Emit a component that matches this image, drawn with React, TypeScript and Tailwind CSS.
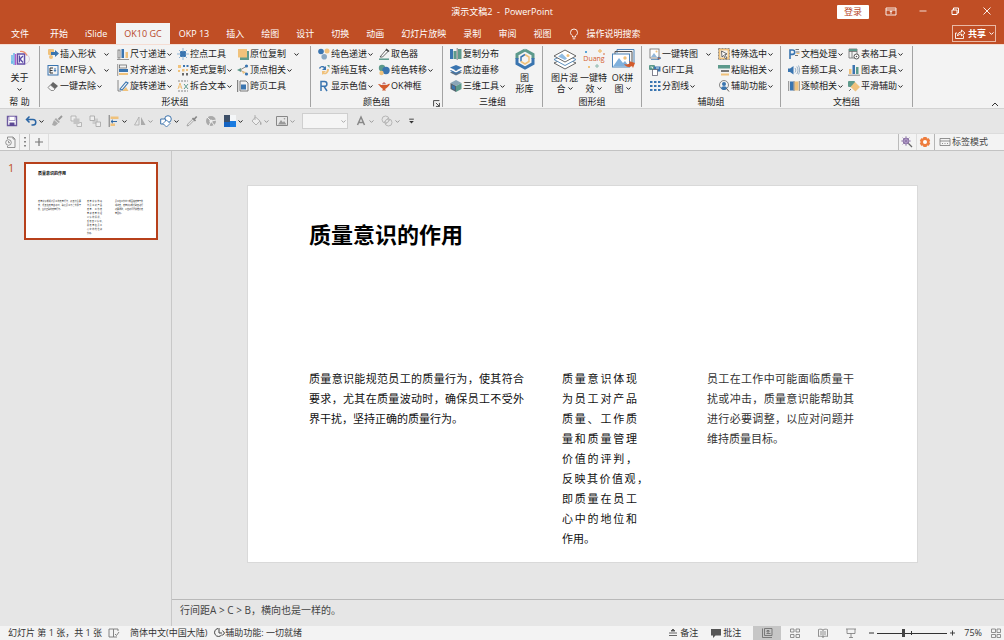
import { useState } from "react";
import type { ReactNode } from "react";

const BLUE = "#3a75b0";
const TEAL = "#5d9a8c";
const SAND = "#f0c27c";
const GREY = "#6b6b6b";
const RUST = "#d35b2c";

function Icon({ children, size = "size-3" }: { children: ReactNode; size?: string }) {
  return (
    <svg viewBox="0 0 12 12" className={`${size} shrink-0`} fill="none" aria-hidden="true">
      {children}
    </svg>
  );
}

function Chevron({ className = "" }: { className?: string }) {
  return (
    <svg viewBox="0 0 5 3" className={`w-[5px] h-[3px] shrink-0 ${className}`} fill="none" aria-hidden="true">
      <path d="M.5 .4 2.5 2.4 4.5 .4" stroke="currentColor" strokeWidth="1" />
    </svg>
  );
}

const icons: Record<string, ReactNode> = {
  insertShape: (
    <>
      <rect x="1" y="1" width="6" height="6" rx="1" fill={SAND} />
      <path d="M4 4h4V2l4 3.500-4 3.500V7H4z" fill={BLUE} />
      <circle cx="4" cy="9" r="2" fill={SAND} />
    </>
  ),
  emf: (
    <>
      <rect x="1" y="1.500" width="10" height="9.500" stroke={BLUE} />
      <path d="M6 4H3v5h3M3 6.500h2.500" stroke="#333" />
      <path d="M8 4v3M7 6l1 1.500L9 6" stroke={BLUE} />
    </>
  ),
  eraser: (
    <>
      <path d="M1 7.500 6 2l5 4-4.500 4.500H4z" fill="#666" />
      <path d="M1 7.500 3.500 5 8 9l-1.500 1.500H4z" fill="#f5f5f5" stroke="#777" strokeWidth=".7" />
    </>
  ),
  size: (
    <>
      <rect x="1" y="2" width="2" height="8" stroke={GREY} strokeWidth=".8" />
      <rect x="4.500" y="1" width="2.500" height="9" fill={BLUE} />
      <rect x="8.500" y="4" width="2.500" height="6" fill={SAND} />
      <path d="M0 11.500h12" stroke={GREY} strokeWidth=".7" />
    </>
  ),
  align: (
    <>
      <rect x="2.500" y="1" width="7" height="3" stroke={GREY} strokeWidth=".8" />
      <rect x="2" y="5" width="9" height="3" fill={BLUE} />
      <rect x="2" y="9" width="9" height="2" fill={SAND} />
      <path d="M.7 0v12" stroke={GREY} strokeWidth=".7" />
    </>
  ),
  rotate: (
    <>
      <path d="M1 0v11h3" stroke={GREY} strokeWidth=".8" />
      <path d="M5 11l4-4 2.500 4z" fill={SAND} />
      <path d="M3 9 9 2l2 1-6 7z" fill="#f5f5f5" stroke={BLUE} strokeWidth="1.100" />
    </>
  ),
  control: (
    <>
      <rect x="3" y="3" width="6" height="6" fill={BLUE} />
      <path d="M6 0v12M0 6h12M2 2l8 8M10 2 2 10" stroke="#77a4cd" strokeWidth=".8" />
      <rect x="4" y="4" width="4" height="4" fill={BLUE} />
    </>
  ),
  matrix: (
    <>
      <path d="M1 1h3v3H1zM1 6h2v2H1z" fill={SAND} />
      <path d="M6 1h2v2H6zM9.500 1h2v2h-2z" fill={BLUE} />
      <path d="M5 5h2.500v2.500H5zM9 5h2v2H9z" fill={SAND} />
      <path d="M5 9h2v2.500H5zM9 9h2v2.500H9z" fill={GREY} />
    </>
  ),
  splitText: (
    <>
      <path d="M1 1h10M1 11h10" stroke={GREY} strokeWidth=".8" strokeDasharray="2 1" />
      <path d="M1 9 3 3l2 6M1.600 7h2.800" stroke={SAND} />
      <path d="M7 4l4 5M11 4 7 9" stroke={TEAL} />
    </>
  ),
  copyInPlace: (
    <>
      <path d="M3 3h9v9H3z" fill={TEAL} />
      <path d="M1 1h9v8.500H1z" fill={SAND} />
    </>
  ),
  vertex: (
    <>
      <path d="M10 2 3 6l7 4" stroke={GREY} strokeWidth=".8" />
      <path d="M0 6l4-2v4z" fill={TEAL} />
      <circle cx="9.500" cy="2" r="1.600" fill={BLUE} />
      <circle cx="9.500" cy="10" r="1.600" fill={BLUE} />
      <path d="M5 7l4 1-3 2z" fill={SAND} />
    </>
  ),
  crossPage: (
    <>
      <path d="M3 1h6l2 2v8H3z" stroke={GREY} strokeWidth=".9" />
      <path d="M.7 0v12" stroke={GREY} />
      <rect x="4" y="4.500" width="5" height="5" fill={BLUE} />
    </>
  ),
  solid: (
    <>
      <circle cx="3" cy="3.500" r="2.800" fill={BLUE} />
      <circle cx="9" cy="3" r="2.500" fill={SAND} />
      <circle cx="6.200" cy="8.800" r="2.800" fill="#8aa8c2" />
    </>
  ),
  gradient: (
    <>
      <path d="M1 4c2-3 5-2 6-1l1-1v4H4l2-2C4 3 3 3 2 5z" fill={BLUE} />
      <path d="M11 5c0 4-3 6-6 5l-1 1V7h4L6 9c2 0 3-2 3-4z" fill={SAND} />
      <path d="M9 1h2.500v3z" fill={TEAL} />
    </>
  ),
  colorValue: (
    <path d="M3 11V1.500h3.500a2.300 2.300 0 0 1 0 4.800H3M6 6.300 9 11" stroke={BLUE} strokeWidth="1.500" />
  ),
  picker: (
    <>
      <path d="M2 9 8 2l2 1.500L4.500 9z" stroke="#555" fill="#fff" strokeWidth=".9" />
      <path d="M8 1l3 2.500" stroke="#444" strokeWidth="1.600" />
      <path d="M1 11.200h10" stroke={TEAL} strokeWidth="1.500" />
    </>
  ),
  solidShift: (
    <>
      <circle cx="4" cy="4" r="3.200" fill={TEAL} />
      <circle cx="8" cy="6.500" r="3.700" fill={BLUE} />
      <circle cx="3.500" cy="9" r="2.200" fill={SAND} />
    </>
  ),
  lamp: (
    <>
      <path d="M0 4c2-.5 2.500 1 4 1h4c2 0 2-2 4-1-1 2-3 4-4 4.500L7 9l1 1.500H4L5 9C3 8 2 6 0 4z" fill={RUST} />
      <path d="M5 4.500V3h2v1.500" stroke="#a33" strokeWidth=".8" />
    </>
  ),
  distribute: (
    <>
      <rect x="0" y="1" width="3" height="10" fill={BLUE} />
      <rect x="3.500" y="3" width="3" height="8" fill={TEAL} />
      <path d="M8 1h3.500v10H8z" fill={TEAL} />
      <path d="M7.200 0v12" stroke="#555" strokeWidth=".7" />
    </>
  ),
  bottomShift: (
    <>
      <path d="M0 8.500 6 6l6 2.500L6 11.500z" fill="#60758a" />
      <path d="M0 4.500 6 7l6-2.500V6L6 9 0 6z" fill="#fff" />
      <path d="M0 3.500 6 1l6 2.500-6 3z" fill={BLUE} />
      <path d="M1 6l5 2.500L11 6l1 .8-6 3-6-3z" fill={BLUE} />
    </>
  ),
  cube: (
    <>
      <path d="M6 0l5.500 3L6 6 .5 3z" fill="#8aa6b8" />
      <path d="M.5 3 6 6v6L.5 9z" fill="#55636e" />
      <path d="M11.500 3 6 6v6l5.500-3z" fill={TEAL} />
      <path d="M2 5l3 1.600v3.500L2 8.500z" fill={BLUE} />
    </>
  ),
  toImage: (
    <>
      <rect x="1" y="1" width="9" height="9" stroke={GREY} strokeWidth=".8" fill="#fff" />
      <path d="M2 9l3-4 3 4z" fill="#92b8da" />
      <path d="M2 11.500h7M9 9l3 1-3 2z" stroke={BLUE} fill={RUST} strokeWidth=".7" />
      <circle cx="7.500" cy="3.500" r="1" fill={SAND} />
    </>
  ),
  gif: (
    <>
      <rect x="0" y="1" width="6" height="5" rx="1" fill={TEAL} />
      <rect x="5" y="2.500" width="6.500" height="5" fill={BLUE} />
      <rect x="3.500" y="5.500" width="5" height="6" fill="#fff" stroke="#667" strokeWidth=".8" />
      <path d="M1.500 3h2v1.500M7 4h3" stroke="#fff" strokeWidth=".8" />
    </>
  ),
  divider: (
    <path
      d="M1 1h2.500v2H1zM5 1h2.500v2H5zM9 1h2.500v2H9zM1 5h2.500v2H1zM5 5h2.500v2H5zM9 5h2.500v2H9zM1 9h2.500v2H1zM5 9h2.500v2H5zM9 9h2.500v2H9z"
      fill={BLUE}
    />
  ),
  select: (
    <>
      <rect x="1.500" y="1.500" width="9" height="9" stroke={SAND} strokeWidth="1.800" />
      <path d="M.5 .5h11v11H.5z" stroke={GREY} strokeWidth=".7" strokeDasharray="2 1" />
      <path d="M3.500 3l5.500 3-2.300.7L9 10l-1.500.8L5.700 7.500 4 9z" fill="#fff" stroke="#444" strokeWidth=".8" />
    </>
  ),
  paste: (
    <>
      <rect x="0" y="1" width="12" height="3.500" fill={TEAL} />
      <rect x="3" y="6" width="8" height="2" fill="#777" />
      <rect x="3" y="9.500" width="8" height="2" fill={SAND} />
    </>
  ),
  assist: (
    <>
      <circle cx="6" cy="5" r="4.500" stroke={GREY} strokeWidth=".8" />
      <circle cx="6" cy="4" r="2" fill={BLUE} />
      <path d="M3 8.500c0-3 6-3 6 0L7 10H5z" fill={BLUE} />
      <path d="M8.500 8.500 11 11.500" stroke="#555" />
    </>
  ),
  doc: (
    <>
      <path d="M2 11V2h2.500a2.200 2.200 0 0 1 0 4.400H2" stroke={BLUE} strokeWidth="1.600" />
      <path d="M7.500 1.500H11M8 4h3.500M7 7.500h3" stroke="#666" strokeWidth=".9" />
      <path d="M8.500 5.500h3" stroke={SAND} />
    </>
  ),
  audio: (
    <>
      <path d="M0 4.500h2L5.500 2v8.500L2 8H0z" fill={BLUE} />
      <path d="M7 4c1 1.500 1 3 0 4.500M8.800 2.500c1.600 2.500 1.600 5 0 7.500M10.500 1.500c1.500 3 1.500 6 0 9" stroke="#7d9cb8" strokeWidth=".8" />
    </>
  ),
  frames: (
    <>
      <path d="M.7 1v10M11.300 1v10" stroke="#888" />
      <rect x="2" y="1.500" width="3.500" height="9" fill={BLUE} />
      <rect x="6.500" y="1.500" width="4" height="9" fill={SAND} />
      <path d="M6 1v10" stroke="#555" strokeWidth=".7" />
    </>
  ),
  table: (
    <>
      <path d="M1 1h8v9H1zM1 3.500h8M4 1v9" stroke={GREY} strokeWidth=".8" />
      <path d="M1 1h8v2H1z" fill={TEAL} />
      <circle cx="8.500" cy="8.500" r="2.500" fill="#fff" stroke="#555" />
      <circle cx="8.500" cy="8.500" r=".8" fill="#555" />
    </>
  ),
  chart: (
    <>
      <rect x="1" y="5" width="2.500" height="5" fill={SAND} />
      <rect x="4.500" y="1" width="2.500" height="9" fill={BLUE} />
      <rect x="8" y="3" width="2.500" height="7" fill={TEAL} />
      <path d="M0 11.200h12" stroke="#666" strokeWidth=".8" />
    </>
  ),
  smooth: (
    <>
      <rect x="0" y="1" width="7" height="6" rx="1" fill={TEAL} />
      <path d="M7 2 12 7l-4.500 4.500L2.500 7z" fill={SAND} />
      <path d="M1 11l2-2" stroke={GREY} />
    </>
  ),
};

type Cmd = { icon: string; text: string; menu?: boolean; spaced?: boolean };

const cmd = (icon: string, text: string, menu = false, spaced = false): Cmd => ({ icon, text, menu, spaced });

function CmdButton({ icon, text, menu, spaced }: Cmd) {
  return (
    <button className="flex h-4 items-center whitespace-nowrap hover:bg-gray-200">
      <Icon>{icons[icon]}</Icon>
      <span className="ml-px">{text}</span>
      {menu && <Chevron className={spaced ? "ml-2" : "ml-px"} />}
    </button>
  );
}

function CmdColumn({ items, width = "w-[60px]" }: { items: Cmd[]; width?: string }) {
  return (
    <div className={`flex shrink-0 flex-col items-start ${width}`}>
      {items.map((c) => (
        <CmdButton key={c.text} {...c} />
      ))}
    </div>
  );
}

function Group({ title, width, children, launcher }: { title: string; width: string; children: ReactNode; launcher?: boolean }) {
  return (
    <section className={`relative my-px flex shrink-0 flex-col border-r border-[#a3a3a3] ${width}`} aria-label={title}>
      <div className="flex h-12 pl-[7px]">{children}</div>
      <div className="h-3 text-center leading-4">{title}</div>
      {launcher && (
        <button aria-label="更多选项" className="absolute bottom-0 right-[2px]">
          <Icon size="size-[7px]">
            <path d="M1 11V1h10M5 5l6 6M11 5v6H5" stroke="#333" strokeWidth="1.500" />
          </Icon>
        </button>
      )}
    </section>
  );
}

function BigButton({ art, lines, menu }: { art: ReactNode; lines: string[]; menu?: boolean }) {
  return (
    <button className="flex w-[29px] shrink-0 flex-col items-center whitespace-nowrap leading-[11px] hover:bg-gray-200">
      <svg viewBox="0 0 24 22" className="mt-[2px] h-[22px] w-6 shrink-0" fill="none" aria-hidden="true">
        {art}
      </svg>
      <span className="mt-[2px]">{lines[0]}</span>
      <span className="flex items-center gap-[2px]">
        {lines[1]}
        {menu && <Chevron />}
      </span>
    </button>
  );
}

function Ribbon() {
  return (
    <div className="relative flex h-[65px] shrink-0 overflow-hidden border-b border-t border-b-[#d2d2d2] border-t-[#f5ddd3] bg-[#f3f3f3]">
      <section className="my-px flex w-10 shrink-0 flex-col items-center border-r border-[#a3a3a3]" aria-label="帮助">
        <button className="flex h-12 flex-col items-center">
          <svg viewBox="0 0 20 18" className="mt-[2px] h-[22px] w-5" fill="none" aria-hidden="true">
            <ellipse cx="14" cy="9" rx="5.500" ry="5" stroke="#d5c9dc" />
            <path d="M2 5v9M4 3v12M1 12h2" stroke="#69b8e8" strokeWidth="1.500" />
            <path d="M5.500 4v11" stroke="#b25bc9" strokeWidth="1.500" />
            <path d="M7.500 4h7v10h-7z" fill="#fff" stroke="#6650a8" strokeWidth="1.500" />
            <path d="M9.500 5.500v7M13 6l-3 3 3 3.500" stroke="#5a4aa5" strokeWidth="1.300" />
            <path d="M10 1.500c4-.5 6 2 7 4" stroke="#ee8c6c" strokeWidth="1.200" />
          </svg>
          <span className="mt-[2px] leading-[11px]">关于</span>
          <Chevron className="mt-[5px]" />
        </button>
        <div className="h-3 leading-4">帮 助</div>
      </section>

      <Group title="形状组" width="w-[271px]">
        <CmdColumn
          width="w-[70px]"
          items={[cmd("insertShape", "插入形状", true, true), cmd("emf", "EMF导入", true, true), cmd("eraser", "一键去除", true)]}
        />
        <CmdColumn items={[cmd("size", "尺寸递进", true), cmd("align", "对齐递进", true), cmd("rotate", "旋转递进", true)]} />
        <CmdColumn items={[cmd("control", "控点工具"), cmd("matrix", "矩式复制", true), cmd("splitText", "拆合文本", true)]} />
        <CmdColumn items={[cmd("copyInPlace", "原位复制", true, true), cmd("vertex", "顶点相关", true), cmd("crossPage", "跨页工具")]} />
      </Group>

      <Group title="颜色组" width="w-[132px]" launcher>
        <CmdColumn items={[cmd("solid", "纯色递进", true), cmd("gradient", "渐纯互转", true), cmd("colorValue", "显示色值", true)]} />
        <CmdColumn items={[cmd("picker", "取色器"), cmd("solidShift", "纯色转移", true), cmd("lamp", "OK神框")]} />
      </Group>

      <Group title="三维组" width="w-[100px]">
        <CmdColumn items={[cmd("distribute", "复制分布"), cmd("bottomShift", "底边垂移"), cmd("cube", "三维工具", true)]} />
        <BigButton
          lines={["图", "形库"]}
          art={
            <>
              <path d="M12 2 4 6.500V11" stroke={TEAL} strokeWidth="3" />
              <path d="M12 2l8 4.500V11" stroke={TEAL} strokeWidth="3" />
              <path d="M4 10v5.500l8 4.500 8-4.500V10" stroke={BLUE} strokeWidth="3" />
              <path d="M12 6.500 8 9v4.500" stroke={BLUE} strokeWidth="1.500" />
              <path d="M12 6.500 16 9v4.500L12 16l-4-2.500" stroke={SAND} strokeWidth="1.500" />
            </>
          }
        />
      </Group>

      <Group title="图形组" width="w-[99px]">
        <BigButton
          menu
          lines={["图片混", "合"]}
          art={
            <>
              <path d="M1 15l11 6 11-6-11-5z" fill="#fff" stroke="#555" strokeWidth=".9" />
              <path d="M1 11.500l11 6 11-6-11-5z" fill="#fff" stroke="#4d84b8" strokeWidth=".9" />
              <path d="M1 8l11 6 11-6-11-6z" fill="#fff" stroke="#555" strokeWidth=".9" />
              <path d="M5 8.500 9 5.500l5 5-2 1.500z" fill="#91bce2" />
              <circle cx="15" cy="7.500" r="1.500" fill={SAND} />
            </>
          }
        />
        <BigButton
          menu
          lines={["一键特", "效"]}
          art={
            <>
              <text x="12" y="13" textAnchor="middle" fontSize="7" fill={RUST}>
                Duang
              </text>
              <path d="M3 3h2v2H3z" fill="#5aa5d8" />
              <path d="M18 1v4M16 3h4" stroke={SAND} strokeWidth="1.400" />
              <path d="M6 18h2v2H6z" fill={SAND} />
              <path d="M15 16v4M13 18h4" stroke="#8fb8b0" />
              <circle cx="22" cy="6" r=".8" fill={RUST} />
            </>
          }
        />
        <BigButton
          menu
          lines={["OK拼", "图"]}
          art={
            <>
              <path d="M6 5V1.500h17V15" stroke="#4d84b8" />
              <path d="M4 7V3.500h17V17" stroke="#555" />
              <rect x="1.500" y="6" width="17" height="13" fill="#fff" stroke="#4d84b8" />
              <path d="M2 18.500 8 10l4 5 2-2 4 5.500z" fill="#7fb0dc" />
              <circle cx="14" cy="10" r="1.700" fill={SAND} />
              <path d="M13 16c3 1 5 0 6-1l-1-2 6 2-2 5-1-2c-3 2-6 1-8-2z" fill={RUST} />
            </>
          }
        />
      </Group>

      <Group title="辅助组" width="w-[139px]">
        <CmdColumn width="w-[69px]" items={[cmd("toImage", "一键转图", true, true), cmd("gif", "GIF工具"), cmd("divider", "分割线", true)]} />
        <CmdColumn items={[cmd("select", "特殊选中", true), cmd("paste", "粘贴相关", true), cmd("assist", "辅助功能", true)]} />
      </Group>

      <Group title="文档组" width="w-[132px]">
        <CmdColumn items={[cmd("doc", "文档处理", true), cmd("audio", "音频工具", true), cmd("frames", "逐帧相关", true)]} />
        <CmdColumn items={[cmd("table", "表格工具", true), cmd("chart", "图表工具", true), cmd("smooth", "平滑辅助", true)]} />
      </Group>

      <button aria-label="折叠功能区" className="ml-auto mr-[5px] self-end pb-px">
        <svg viewBox="0 0 8 5" className="h-[5px] w-2" fill="none">
          <path d="M1 4l3-3 3 3" stroke="#333" />
        </svg>
      </button>
    </div>
  );
}

const tabs = ["文件", "开始", "iSlide", "OK10 GC", "OKP 13", "插入", "绘图", "设计", "切换", "动画", "幻灯片放映", "录制", "审阅", "视图"];

function Header() {
  const [active, setActive] = useState("OK10 GC");
  return (
    <header className="shrink-0 bg-[#c04e25] text-white">
      <div className="flex h-[23px] items-center px-[11px]">
        <div className="flex-1" />
        <h1 className="whitespace-pre">演示文稿2  -  PowerPoint</h1>
        <div className="flex flex-1 items-center justify-end gap-5">
          <button className="mr-[-4px] h-[14px] w-8 rounded-[1px] bg-white leading-[14px] text-[#b7472a]">登录</button>
          <button aria-label="功能区显示选项">
            <Icon>
              <path d="M1 2h10v7H1zM1 4h10M6 8V5M4.800 6 6 4.800 7.200 6" stroke="#fff" strokeWidth=".9" />
            </Icon>
          </button>
          <button aria-label="最小化">
            <Icon>
              <path d="M2.500 5h7" stroke="#fff" strokeWidth=".8" />
            </Icon>
          </button>
          <button aria-label="还原">
            <Icon>
              <path d="M3 4h5v4.500H3zM4.500 4V2h5v5H8" stroke="#fff" strokeWidth="1" />
            </Icon>
          </button>
          <button aria-label="关闭">
            <Icon>
              <path d="M2.500 1.500l7 7M9.500 1.500l-7 7" stroke="#fff" strokeWidth=".9" />
            </Icon>
          </button>
        </div>
      </div>
      <nav className="flex h-[21px] items-stretch gap-px pl-[3px]">
        {tabs.map((t) => (
          <button
            key={t}
            onClick={() => setActive(t)}
            className={`shrink-0 whitespace-nowrap px-2 first:mr-1 ${t === active ? "bg-[#f3f3f3] text-[#b7472a]" : "hover:bg-[#a9421c]"}`}
          >
            {t}
          </button>
        ))}
        <button className="ml-2 flex shrink-0 items-center gap-[6px] whitespace-nowrap">
          <Icon>
            <path d="M4.500 9V7.800C3 6.800 2.500 5.700 2.500 4.500a3.500 3.500 0 0 1 7 0c0 1.200-.5 2.300-2 3.300V9zM4.700 10.800h2.600" stroke="#fff" strokeWidth=".9" />
          </Icon>
          操作说明搜索
        </button>
        <button className="mb-[2px] ml-auto mr-2 mt-[2px] flex shrink-0 items-center gap-[2px] border border-[#e9b9a6] px-px font-bold">
          <Icon>
            <path d="M3 5H1.500v5.500h8V7.500M3.500 8c0-3 2-4 4-4V2l3.500 3-3.500 3V6c-2 0-3 .5-4 2z" stroke="#fff" strokeWidth=".9" />
          </Icon>
          共享
          <Chevron className="ml-px" />
        </button>
      </nav>
    </header>
  );
}

function Tool({ label, menu, dim, children }: { label: string; menu?: boolean; dim?: boolean; children: ReactNode }) {
  return (
    <button aria-label={label} className={`flex items-center gap-[2px] ${dim ? "text-[#999]" : "text-[#222]"}`}>
      <Icon>{children}</Icon>
      {menu && <Chevron />}
    </button>
  );
}

function QuickAccess() {
  return (
    <div className="flex h-6 shrink-0 items-center gap-[7px] bg-[#e6e6e6] pl-[6px]">
      <Tool label="保存">
        <path d="M1.500 1.500h9v9h-9z" fill="#fff" stroke="#6d5aa0" strokeWidth="1.400" />
        <path d="M3 1.500h6v4H3z" fill="#fff" stroke="#8a79b4" strokeWidth=".7" />
        <path d="M3.500 7.500h5v3.500h-5z" fill="#5d4a94" />
      </Tool>
      <Tool label="撤消" menu>
        <path d="M1.500 4.500H8a2.800 2.800 0 0 1 0 5.600H6.500M4.500 1.500l-3 3 3 3" stroke="#2b66a5" strokeWidth="1.500" />
      </Tool>
      <Tool label="格式刷" dim>
        <path d="M11 1 7.500 4.500" stroke="#999" strokeWidth="1.800" />
        <path d="M5 3l4 4-1.500 1-4-3.500zM3 5l4 3.500-3 2.500-3-1z" fill="#aaa" />
      </Tool>
      <Tool label="上移一层" dim>
        <path d="M1 1h5v5H1zM7 7.500h4.500v4H7z" fill="#eee" stroke="#aaa" strokeWidth=".8" />
        <path d="M3.500 3.500h6v5.500h-6z" fill="#c4c4c4" />
      </Tool>
      <Tool label="下移一层" dim>
        <path d="M3.500 3.500h5.500V9H3.500z" fill="#ccc" />
        <path d="M1 1h4.500v4.500H1zM7 7h4.500v4.500H7z" fill="#eee" stroke="#aaa" strokeWidth=".9" />
      </Tool>
      <Tool label="对齐" menu>
        <path d="M1.200 0v12" stroke="#777" />
        <path d="M2.500 1.500h8V4h-8zM2.500 8.500H7V11H2.500z" fill={SAND} />
        <path d="M3 6.500h6M5 4.800 3 6.500l2 1.700" stroke="#2b66a5" />
      </Tool>
      <Tool label="旋转" menu dim>
        <path d="M5 2v8H.5z" stroke="#aaa" strokeWidth=".8" />
        <path d="M7 2v8h4.500z" fill="#aaa" />
      </Tool>
      <Tool label="形状" menu>
        <circle cx="8" cy="4" r="3.300" fill="#fff" stroke="#2b66a5" strokeWidth=".9" />
        <path d="M.7 4h5v5h-5z" fill="#fff" stroke="#2b66a5" strokeWidth=".9" />
        <path d="M6.500 5 10 8.500 6.500 12 3 8.500z" fill="#fff" stroke="#2b66a5" strokeWidth=".8" />
      </Tool>
      <Tool label="取色器" dim>
        <path d="M1 11l.8-2L7 3.800l1.300 1.300L3 10.400z" stroke="#999" strokeWidth=".8" />
        <path d="M6.500 3l3 3M8 4.500 10.700 1.500" stroke="#888" strokeWidth="1.700" />
      </Tool>
      <Tool label="合并形状" dim>
        <circle cx="6" cy="6" r="5" fill="#aaa" />
        <path d="M6 6 2 2M6 6l5.500-1M6 6 4 11M6 6l3 4" stroke="#eee" />
        <circle cx="6" cy="6" r="1.600" fill="#eee" />
      </Tool>
      <Tool label="主题颜色" menu>
        <path d="M0 0h12v12H0z" fill="#1a7be0" />
        <path d="M0 0h6v7H0z" fill="#3e5068" />
        <path d="M6 0h6v6H6z" fill="#f4f6f8" />
        <path d="M0 7h6v5H0z" fill="#1463c2" />
      </Tool>
      <Tool label="填充" menu dim>
        <path d="M5.500 2 10 6l-4 4-4-4zM5 0v5" stroke="#aaa" strokeWidth=".9" fill="#eee" />
        <path d="M10.500 6c1 1.500 1.500 3 .5 4-1 0-1.500-1.500-.5-4z" fill="#aaa" />
      </Tool>
      <Tool label="图片" menu dim>
        <path d="M.5 1.500h11v9H.5z" stroke="#888" />
        <path d="M2 9.500 5 5l2 2.500L8 6l2.500 3.500z" fill="#999" />
        <circle cx="8.500" cy="3.800" r=".8" fill="#999" />
      </Tool>
      <label className="relative flex items-center text-[#aaa]">
        <select aria-label="字号" className="h-4 w-[46px] appearance-none border border-[#cfcfcf] bg-[#f5f5f5]" />
        <Chevron className="pointer-events-none absolute right-[2px]" />
      </label>
      <Tool label="字体颜色" menu dim>
        <path d="M2.500 10 6 2l3.500 8M3.800 7.500h4.400" stroke="#888" strokeWidth="1.500" />
      </Tool>
      <Tool label="组合" menu dim>
        <circle cx="4.500" cy="4.500" r="3.500" stroke="#aaa" strokeWidth=".8" />
        <circle cx="7.500" cy="7.500" r="3.500" stroke="#aaa" strokeWidth=".8" />
        <path d="M2 8l6-6M4 10l6-6" stroke="#bbb" strokeWidth=".8" />
      </Tool>
      <button aria-label="自定义快速访问工具栏" className="ml-px">
        <Icon size="size-[7px]">
          <path d="M2 2h8" stroke="#333" strokeWidth="1.500" />
          <path d="M2 5h8L6 9.500z" fill="#333" />
        </Icon>
      </button>
    </div>
  );
}

function DocumentTabs() {
  return (
    <div className="flex h-[18px] shrink-0 items-stretch border-b border-t border-b-[#c3c3c3] border-t-[#dcdcdc] bg-[#f3f3f3]">
      <button aria-label="文档列表" className="flex w-5 items-center justify-center border-r border-[#d4d4d4]">
        <Icon>
          <path d="M3.500 3V1H9l2 2v8.500H3.500V10M9 1v2h2" stroke="#888" strokeWidth=".9" />
          <circle cx="4.500" cy="6.500" r="2.800" stroke="#888" strokeWidth=".9" />
          <path d="M4.500 5v1.700H6" stroke="#888" strokeWidth=".9" />
        </Icon>
      </button>
      <button aria-label="更多" className="flex w-[10px] items-center justify-center border-r border-[#c4c4c4]">
        <svg viewBox="0 0 2 10" className="h-[10px] w-[2px]">
          <path d="M0 0h2v1.500H0zM0 4h2v1.500H0zM0 8h2v1.500H0z" fill="#888" />
        </svg>
      </button>
      <button aria-label="新建" className="flex w-[19px] items-center justify-center border-r border-[#dedede]">
        <Icon>
          <path d="M6 2v8M2 6h8" stroke="#777" strokeWidth="1.200" />
        </Icon>
      </button>
      <button aria-label="查找" className="ml-auto flex w-[19px] items-center justify-center border-x border-l-[#bbb] border-r-[#ddd]">
        <Icon>
          <circle cx="5" cy="5" r="3" fill="#bfa8d4" stroke="#8c75a6" />
          <path d="M5 0v10M0 5h10M1.500 1.500l7 7M8.500 1.500l-7 7" stroke="#8c75a6" strokeWidth=".7" />
          <path d="M7.500 7.500 11 11" stroke="#666" strokeWidth="1.300" />
        </Icon>
      </button>
      <button aria-label="设置" className="flex w-[18px] items-center justify-center border-r border-[#b5b5b5]">
        <Icon>
          <path d="M4.500 1h3l.6 1.600L9.800 2.200l1.400 2.500L10.200 6l1 1.300-1.400 2.500-1.700-.4-.6 1.600h-3l-.6-1.600-1.700.4L.8 7.300 1.800 6l-1-1.300 1.400-2.500 1.700.4z" fill="#ee7d3e" />
          <circle cx="6" cy="6" r="2" fill="#fff" />
        </Icon>
      </button>
      <button className="flex items-center gap-px pl-1 pr-4 text-[#444]">
        <Icon>
          <path d="M1 2.500h10v7H1zM1 5h10M3 7.500h1M5.500 7.500h1M8 7.500h1" stroke="#777" strokeWidth=".8" />
        </Icon>
        标签模式
      </button>
    </div>
  );
}

// the sixth line keeps its comma outside the text box
const middleLines = ["质量意识体现", "为员工对产品", "质量、工作质", "量和质量管理", "价值的评判，", "反映其价值观，", "即质量在员工", "心中的地位和"];

function MiddleText({ hang }: { hang: string }) {
  return (
    <>
      {middleLines.map((line) =>
        line.length > 6 ? (
          <span key={line} className="block whitespace-nowrap">
            {line.slice(0, 6)}
            <span className={hang}>，</span>
          </span>
        ) : (
          <span key={line} className="block whitespace-nowrap">
            {line}
          </span>
        ),
      )}
    </>
  );
}

const slideTitle = "质量意识的作用";
const leftText = "质量意识能规范员工的质量行为，使其符合要求，尤其在质量波动时，确保员工不受外界干扰，坚持正确的质量行为。";
const rightText = "员工在工作中可能面临质量干扰或冲击，质量意识能帮助其进行必要调整，以应对问题并维持质量目标。";

function Slide() {
  return (
    <article className="aspect-video w-full border border-[#d9d9d9] bg-white px-[61px] text-[11px] leading-5 text-[#111]">
      <h2 className="pt-8 text-[22px] font-bold leading-8 text-black">{slideTitle}</h2>
      <div className="mt-[119px] flex items-start text-justify">
        <p className="w-[215px] shrink-0">{leftText}</p>
        <div className="ml-[38px] w-[75px] shrink-0">
          <div className="[text-align-last:justify]">
            <MiddleText hang="-mr-[11px]" />
          </div>
          作用。
        </div>
        <p className="ml-[70px] w-[147px] shrink-0 text-[#333]">{rightText}</p>
      </div>
    </article>
  );
}

function Thumbnail() {
  return (
    <button className="flex aspect-[12/7] w-[134px] flex-col items-start border-2 border-[#b7401b] bg-white px-3 text-left text-[2px] leading-[4px] text-[#222]">
      <span className="mt-[6px] text-[4px] font-bold leading-[8px] text-black">{slideTitle}</span>
      <span className="mt-[22px] flex items-start text-justify">
        <span className="w-[43px]">{leftText}</span>
        <span className="ml-[6px] w-[15px]">
          <span className="block [text-align-last:justify]">
            <MiddleText hang="-mr-[2px]" />
          </span>
          作用。
        </span>
        <span className="ml-[13px] w-[28px]">{rightText}</span>
      </span>
    </button>
  );
}

function StatusBar() {
  return (
    <footer className="flex h-[14px] shrink-0 items-stretch whitespace-nowrap bg-[#f3f3f3] pl-2 leading-[14px] text-[#333]">
      <span>幻灯片 第 1 张，共 1 张</span>
      <button aria-label="拼写检查" className="ml-[6px] flex items-center">
        <Icon>
          <path d="M1 2h4.500v8H1zM5.500 2H10v2M5.500 10H9M7 7l1.500 1.500L11 5" stroke="#777" strokeWidth=".9" />
        </Icon>
      </button>
      <button className="ml-[10px]">简体中文(中国大陆)</button>
      <button className="ml-[6px] flex items-center">
        <Icon>
          <path d="M5 1.500a4 4 0 1 0 4 6M6 1v5h3M9.500 3.500 11.500 6l-2 2.500" stroke="#444" />
        </Icon>
        辅助功能: 一切就绪
      </button>
      <button className="ml-auto flex items-center gap-px">
        <Icon>
          <path d="M2 6h8M2 8.500h8M4 4l2-2 2 2z" stroke="#555" fill="#555" strokeWidth=".9" />
        </Icon>
        备注
      </button>
      <button className="ml-3 flex items-center gap-px">
        <Icon>
          <path d="M1 2h10v6.500H5.500L3 11V8.500H1z" fill="#555" />
        </Icon>
        批注
      </button>
      <button aria-label="普通视图" className="ml-3 flex w-7 items-center justify-center bg-[#c6c6c6]">
        <Icon>
          <path d="M1.500 1.500v9H11M3.500 1.500H11v7H3.500zM5.500 6.500h4M6 3.500h2v1.500H6z" stroke="#666" strokeWidth=".8" />
        </Icon>
      </button>
      <button aria-label="幻灯片浏览" className="flex w-7 items-center justify-center">
        <Icon>
          <path d="M1.500 5V2h3.500v3zM7 5V2h3.500v3zM1.500 10.500v-3h3.500v3zM7 10.500v-3h3.500v3z" stroke="#777" strokeWidth=".8" />
        </Icon>
      </button>
      <button aria-label="阅读视图" className="flex w-7 items-center justify-center">
        <Icon>
          <path d="M6 3v8M6 3c-1-1-3-1-4.500-.5v7C3 9 5 9 6 10c1-1 3-1 4.500-.5v-7C9 2 7 2 6 3zM3 5h2M3 7h2M7 5h2M7 7h2" stroke="#777" strokeWidth=".8" />
        </Icon>
      </button>
      <button aria-label="幻灯片放映" className="flex w-7 items-center justify-center">
        <Icon>
          <path d="M1 2h10M2 2v4.500h8V2M6 6.500v4M4 10.500h4" stroke="#777" strokeWidth=".8" />
        </Icon>
      </button>
      <button aria-label="缩小" className="flex items-center">
        <Icon>
          <path d="M4 6h5" stroke="#333" />
        </Icon>
      </button>
      <label className="relative flex items-center">
        <span className="absolute left-[34px] h-1 w-px bg-[#333]" />
        <input
          type="range"
          aria-label="缩放"
          min={0}
          max={100}
          defaultValue={37}
          className="h-px w-[70px] appearance-none bg-[#333] [&::-webkit-slider-thumb]:h-2 [&::-webkit-slider-thumb]:w-[3px] [&::-webkit-slider-thumb]:appearance-none [&::-webkit-slider-thumb]:bg-[#444]"
        />
      </label>
      <button aria-label="放大" className="flex items-center">
        <Icon>
          <path d="M3 6h5M5.500 3.500v5" stroke="#333" strokeWidth=".9" />
        </Icon>
      </button>
      <button className="ml-[5px]">75%</button>
      <button aria-label="适应窗口" className="ml-2 mr-[2px] flex items-center">
        <Icon>
          <path d="M1.500 2h4v3.500h-4zM7 2h3.500v3.500H7zM1.500 7.500h4v3h-4zM7 7.500h3.500v3H7z" stroke="#777" strokeWidth=".8" />
        </Icon>
      </button>
    </footer>
  );
}

export default function App() {
  return (
    <div className="flex h-screen flex-col overflow-hidden bg-[#e6e6e6] font-['Open_Sans','Noto_Sans_CJK_SC',sans-serif] text-[9px] leading-3 text-[#222]" lang="zh-CN">
      <Header />
      <Ribbon />
      <QuickAccess />
      <DocumentTabs />
      <div className="flex min-h-0 flex-1">
        <aside className="flex w-[172px] shrink-0 items-start gap-[10px] border-r border-[#c8c8c8] pl-2 pt-[11px]">
          <span className="w-[6px] text-[11px] text-[#c04e25]">1</span>
          <Thumbnail />
        </aside>
        <main className="flex min-w-0 flex-1 flex-col">
          <div className="flex min-h-0 flex-1 items-center pb-[2px] pl-[75px] pr-[86px]">
            <Slide />
          </div>
          <p className="h-[27px] shrink-0 border-t border-[#b9b9b9] pl-2 text-[10px] leading-5 text-[#444]">行间距A &gt; C &gt; B，横向也是一样的。</p>
        </main>
      </div>
      <StatusBar />
    </div>
  );
}
